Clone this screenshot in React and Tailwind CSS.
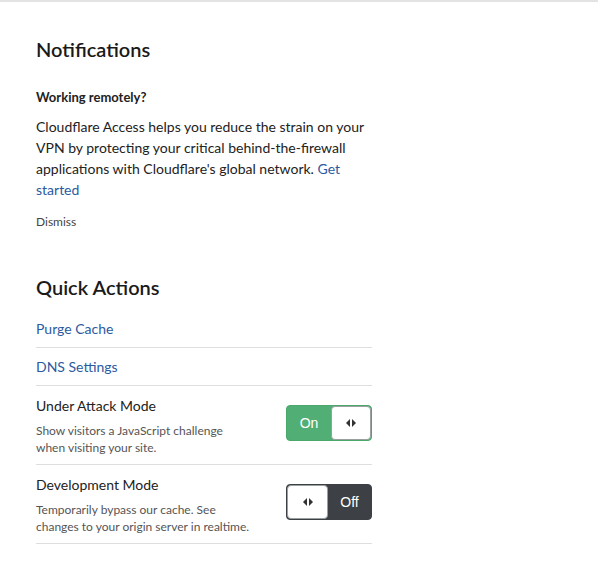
import { useState } from 'react';

const font = { fontFamily: 'Lato, "Noto Sans", sans-serif' };

function Arrows() {
  return (
    <svg width="10" height="8" viewBox="0 0 10 8" className="fill-[#333]">
      <path d="M4 0 L0 4 L4 8 Z" />
      <path d="M6 0 L10 4 L6 8 Z" />
    </svg>
  );
}

function Toggle({ on, onChange }) {
  return (
    <button
      onClick={() => onChange(!on)}
      className={`mt-[10px] flex h-9 w-[86px] shrink-0 overflow-hidden rounded-[4px] border ${on ? 'border-[#4aa86c] bg-[#51ae74]' : 'border-[#3d4145] bg-[#3d4145]'} text-[14px] text-white`}
      style={{ fontFamily: '"Liberation Sans", Arial, sans-serif' }}
    >
      {on ? (
        <>
          <span className="flex w-[44px] items-center justify-center">On</span>
          <span className="flex flex-1 items-center justify-center rounded-[4px] border border-[#9aa0a0] bg-white">
            <Arrows />
          </span>
        </>
      ) : (
        <>
          <span className="flex w-[41px] items-center justify-center rounded-[4px] border border-[#9aa0a0] bg-white">
            <Arrows />
          </span>
          <span className="flex flex-1 items-center justify-center">Off</span>
        </>
      )}
    </button>
  );
}

function ToggleRow({ title, desc, on, onChange }) {
  return (
    <div className="flex items-start justify-between border-b border-[#dedede] pb-[8px] pt-[9px]">
      <div>
        <div className="text-[14px] leading-[21px] text-[#222]">{title}</div>
        <div className="mt-[6px] w-[216px] text-[12px] leading-[17px] text-[#555]">{desc}</div>
      </div>
      <Toggle on={on} onChange={onChange} />
    </div>
  );
}

export default function App() {
  const [attack, setAttack] = useState(true);
  const [dev, setDev] = useState(false);

  return (
    <div className="min-h-[571px] border-t-2 border-[#e3e3e3] bg-white" style={font}>
      <div className="w-[372px] pl-9 pt-[33px]">
        <h2 className="text-[20px] font-semibold leading-[28px] text-[#1a1a1a]">Notifications</h2>

        <div className="mt-[25px] text-[13px] font-bold leading-[18px] text-[#222]">Working remotely?</div>
        <p className="mt-[10px] text-[14px] leading-[21px] text-[#222]">
          Cloudflare Access helps you reduce the strain on your VPN by protecting your critical behind-the-firewall applications with Cloudflare's global network.{' '}
          <a href="#" className="text-[#2c5aa0]">Get started</a>
        </p>
        <button className="mt-[13px] block text-[12px] leading-[17px] text-[#444]">Dismiss</button>

        <h2 className="mt-[43px] text-[20px] font-semibold leading-[28px] text-[#1a1a1a]">Quick Actions</h2>

        <div className="mt-[9px]">
          <a href="#" className="block border-b border-[#dedede] py-[8px] text-[14px] leading-[21px] text-[#2c5aa0]">Purge Cache</a>
          <a href="#" className="block border-b border-[#dedede] py-[8px] text-[14px] leading-[21px] text-[#2c5aa0]">DNS Settings</a>
          <ToggleRow
            title="Under Attack Mode"
            desc="Show visitors a JavaScript challenge when visiting your site."
            on={attack}
            onChange={setAttack}
          />
          <ToggleRow
            title="Development Mode"
            desc="Temporarily bypass our cache. See changes to your origin server in realtime."
            on={dev}
            onChange={setDev}
          />
        </div>
      </div>
    </div>
  );
}
